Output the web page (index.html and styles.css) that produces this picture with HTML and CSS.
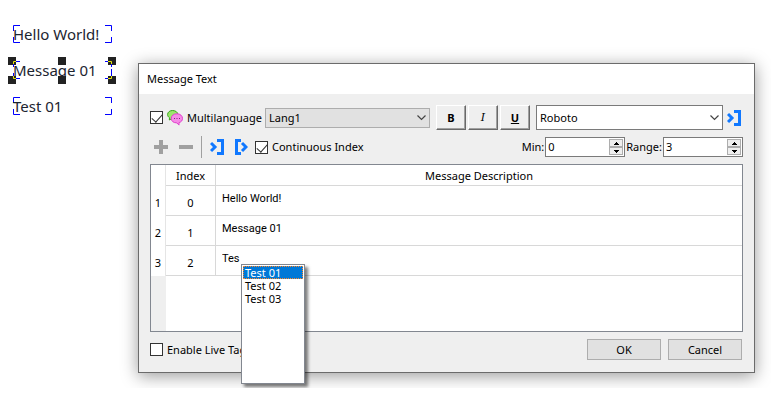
FILE: index.html
```html
<!DOCTYPE html>
<html lang="en">
<head>
<meta charset="utf-8">
<title>Message Text</title>
<link rel="stylesheet" href="styles.css">
</head>
<body>
<svg class="defs" width="0" height="0" aria-hidden="true">
  <symbol id="corners" viewBox="0 0 99 18">
    <path d="M.5 6V.5H7M92 .5h6.500V6M.5 12v5.500H7M92 17.500h6.500V12" fill="none" stroke="#00f"/>
  </symbol>
  <symbol id="in" viewBox="0 0 14 16">
    <path d="M1 4l4 4-4 4M7 1.500h5.500v13H7" fill="none" stroke="#1078ff" stroke-width="3"/>
  </symbol>
  <symbol id="out" viewBox="0 0 14 16">
    <path d="M8 4l4 4-4 4M7 1.500H2.500v13H7" fill="none" stroke="#1078ff" stroke-width="3"/>
  </symbol>
  <symbol id="chevron" viewBox="0 0 9 6">
    <path d="M.5.500l4 4 4-4" fill="none" stroke="#444" stroke-width="1.200"/>
  </symbol>
  <symbol id="up" viewBox="0 0 5 3"><path d="M2 0h1v1h1v1h1v1H0V2h1V1h1z"/></symbol>
  <symbol id="down" viewBox="0 0 5 3"><path d="M0 0h5v1H4v1H3v1H2V2H1V1H0z"/></symbol>
</svg>

<main class="workspace">
  <section class="labels" aria-label="Canvas">
    <div class="label"><svg class="frame"><use href="#corners"/></svg><span>Hello World!</span></div>
    <div class="label">
      <svg class="handles" viewBox="0 0 109 28">
        <path d="M0 0h8v8H0zM50 0h8v8h-8zM100 0h8v8h-8zM0 19h8v8H0zM50 19h8v8h-8zM100 19h8v8h-8z" fill="#222"/>
      </svg>
      <svg class="frame"><use href="#corners"/>
        <path d="M98.500 1v16" stroke="#00f" stroke-dasharray="4 3"/>
        <path d="M.5 3V.5H3M95 .5h3.500V3M.5 15v2.500H3M95 17.500h3.500V15" fill="none" stroke="#e8e800"/>
      </svg>
      <span>Message 01</span>
    </div>
    <div class="label"><svg class="frame"><use href="#corners"/></svg><span>Test 01</span></div>
  </section>

  <form class="dialog" role="dialog" aria-labelledby="title">
    <h1 class="title" id="title">Message Text</h1>
    <div class="content">
      <div class="row">
        <label class="check"><input type="checkbox" checked>
          <svg class="bubbles" width="16" height="16" viewBox="0 0 16 16">
            <path d="M5.500 .5C2.800.5.600 2.200.600 4.500c0 1.400.7 2.500 1.900 3.200L2.300 10 5 8.500c3.200.2 5.800-1.600 5.800-4C10.800 2.200 8.500.5 5.500.5z" fill="#9be66c" stroke="#37a51a"/>
            <path d="M10 3.800C6.600 3.800 4.200 5.800 4.200 8.400c0 2.700 2.300 4.500 5.600 4.500l2.200 2.200v-2.500c2.300-.6 3.500-2.100 3.500-4.200 0-2.600-2.300-4.600-5.500-4.600z" fill="#f58be6" stroke="#e040cc"/>
            <path d="M7 8.500h1M9.500 8.500h1M12 8.500h1" stroke="#8a2080"/>
          </svg>
          <span>Multilanguage</span></label>
        <div class="combo lang">
          <select aria-label="Language"><option>Lang1</option></select>
          <svg class="chevron"><use href="#chevron"/></svg>
        </div>
        <div class="styles">
          <button type="button"><b>B</b></button>
          <button type="button"><i>I</i></button>
          <button type="button"><b><u>U</u></b></button>
        </div>
        <div class="combo font">
          <select aria-label="Font"><option>Roboto</option></select>
          <svg class="chevron"><use href="#chevron"/></svg>
        </div>
        <button type="button" class="tool" aria-label="Apply font"><svg class="bracket"><use href="#in"/></svg></button>
      </div>

      <div class="row second">
        <div class="tools">
          <button type="button" class="tool" aria-label="Add"><svg width="14" height="14"><path d="M5 0h4v5h5v4H9v5H5V9H0V5h5z" fill="#a0a0a0"/></svg></button>
          <button type="button" class="tool" aria-label="Remove"><svg width="14" height="14"><path d="M0 5h14v4H0z" fill="#a0a0a0"/></svg></button>
        </div>
        <div class="tools split">
          <button type="button" class="tool" aria-label="Import"><svg class="bracket"><use href="#in"/></svg></button>
          <button type="button" class="tool" aria-label="Export"><svg class="bracket"><use href="#out"/></svg></button>
        </div>
        <label class="check"><input type="checkbox" checked><span>Continuous Index</span></label>
        <div class="field push">
          <label for="min">Min:</label>
          <div class="spin"><input id="min" type="number" value="0"><span class="steps"><button type="button" aria-label="Increase minimum"><svg><use href="#up"/></svg></button><button type="button" aria-label="Decrease minimum"><svg><use href="#down"/></svg></button></span></div>
        </div>
        <div class="field">
          <label for="range">Range:</label>
          <div class="spin"><input id="range" type="number" value="3"><span class="steps"><button type="button" aria-label="Increase range"><svg><use href="#up"/></svg></button><button type="button" aria-label="Decrease range"><svg><use href="#down"/></svg></button></span></div>
        </div>
      </div>

      <div class="grid">
        <table>
          <thead><tr><td class="num"></td><th class="index">Index</th><th>Message Description</th></tr></thead>
          <tbody>
            <tr><th class="num">1</th><td class="index">0</td><td class="desc">Hello World!</td></tr>
            <tr><th class="num">2</th><td class="index">1</td><td class="desc">Message 01</td></tr>
            <tr><th class="num">3</th><td class="index">2</td><td class="desc"><div class="editor">
              <input type="text" value="Tes" aria-label="Message description">
              <ul class="popup" role="listbox" aria-label="Suggestions">
                <li role="option" aria-selected="true">Test 01</li>
                <li role="option">Test 02</li>
                <li role="option">Test 03</li>
              </ul></div></td></tr>
          </tbody>
        </table>
      </div>

      <div class="footer">
        <label class="check"><input type="checkbox"><span>Enable Live Tag</span></label>
        <button type="submit" class="action">OK</button>
        <button type="button" class="action">Cancel</button>
      </div>
    </div>
  </form>
</main>
</body>
</html>
```
FILE: styles.css
```css
* { box-sizing: border-box; }
body {
  margin: 0;
  background: #fff;
  color: #000;
  font: 11px/14px "Noto Sans", sans-serif;
}
.defs { position: absolute; }
button, input, select { font: inherit; color: inherit; margin: 0; padding: 0; border-radius: 0; }
svg { display: block; flex: none; }

.workspace {
  display: flex;
  align-items: flex-start;
  padding: 0 16px 15px 0;
  overflow: hidden;
}
.labels {
  flex: 0 0 138px;
  display: flex;
  flex-direction: column;
  gap: 18px;
  padding: 25px 0 0 13px;
}
.label {
  position: relative;
  width: 99px;
  height: 18px;
  font: 15px/18px "Noto Sans", sans-serif;
  color: #1c2430;
  white-space: nowrap;
}
.label span { position: relative; }
.frame { position: absolute; inset: 0; width: 99px; height: 18px; }
.handles { position: absolute; left: -5px; top: -4px; width: 109px; height: 28px; }

.dialog {
  flex: 1;
  min-width: 0;
  margin-top: 63px;
  border: 1px solid #6b6b6b;
  background: #efefef;
  box-shadow: 0 3px 16px rgba(0, 0, 0, 0.4);
}
.title {
  margin: 0;
  padding: 0 8px;
  background: #fff;
  font: 11px/30px "Noto Sans", sans-serif;
}
.content { padding: 11px 11px 12px; }
.row { display: flex; align-items: center; height: 25px; }
.second { height: 20px; margin: 7px 0; }
.check { display: flex; align-items: center; gap: 4px; white-space: nowrap; }
.check input {
  appearance: none;
  width: 13px;
  height: 13px;
  border: 1px solid #333;
  background: #fff;
}
.check input:checked::before {
  content: "";
  display: block;
  width: 9px;
  height: 5px;
  margin: 2px 1px;
  border: solid #333;
  border-width: 0 0 1px 1px;
  transform: rotate(-48deg);
}

.combo { position: relative; display: flex; align-items: center; }
.combo select {
  appearance: none;
  width: 100%;
  height: 100%;
  padding: 0 20px 0 3px;
  border: 1px solid #7a7a7a;
  background: #fff;
}
.lang { width: 165px; height: 20px; margin-left: auto; }
.lang select { background: #e1e1e1; border-color: #adadad; }
.font { width: 187px; height: 25px; }
.chevron { position: absolute; right: 4px; width: 9px; height: 6px; pointer-events: none; }

.styles { display: flex; gap: 2px; margin: 0 6px; }
.styles button {
  width: 30px;
  height: 25px;
  border: 1px solid;
  border-color: #fff #696969 #696969 #fff;
  background: #efefef;
  box-shadow: inset -1px -1px #a0a0a0;
}
.styles i { font-family: "DejaVu Serif", serif; }

.tool { border: 0; background: none; }
.row > .tool { margin: 0 2px 0 4px; }
.bracket { width: 14px; height: 16px; }
.tools { display: flex; align-items: center; gap: 11px; padding: 0 8px 0 4px; }
.split { gap: 10px; height: 22px; padding: 0 7px 0 8px; border-left: 1px solid #a0a0a0; }
.field { display: flex; align-items: center; gap: 1px; margin-left: 1px; }
.push { margin-left: auto; }
.spin {
  display: flex;
  width: 80px;
  height: 20px;
  border: 1px solid #7a7a7a;
  background: #fff;
}
.spin input {
  flex: 1;
  min-width: 0;
  padding-left: 2px;
  border: 0;
  background: none;
  appearance: textfield;
  outline: 0;
}
.spin input::-webkit-inner-spin-button { appearance: none; }
.steps { display: flex; flex-direction: column; width: 15px; padding: 1px 1px 1px 0; }
.steps button {
  flex: 1;
  display: grid;
  place-items: center;
  border: 1px solid #adadad;
  background: #efefef;
}
.steps svg { width: 5px; height: 3px; }

.grid {
  min-height: 168px;
  border: 1px solid #828790;
  background: linear-gradient(90deg, #efefef 15px, #fff 15px);
}
table { width: 100%; border-spacing: 0; table-layout: fixed; background: #fff; }
th { font-weight: normal; }
td, th { height: 30px; padding: 2px 0 0; border: solid #d8d8d8; border-width: 0 0 1px; }
thead td, thead th { height: 21px; }
.num { width: 15px; text-align: center; border-width: 0 1px 0 0; border-color: #e5e5e5; }
.index { width: 50px; text-align: center; border-right-width: 1px; }
tbody .num, tbody .index { padding-top: 4px; }
.desc { padding: 6px 6px 5px; vertical-align: top; font-family: Roboto, sans-serif; font-size: 11px; }
.editor { position: relative; }
.editor input { display: block; width: 100%; height: 14px; border: 0; outline: 0; }
.popup {
  position: absolute;
  left: 19px;
  top: 12px;
  width: 64px;
  min-height: 120px;
  margin: 0;
  padding: 1px;
  list-style: none;
  border: 1px solid #828790;
  background: #fff;
  box-shadow: 3px 3px 3px rgba(0, 0, 0, 0.5);
  font: 11px/13px "Noto Sans", sans-serif;
}
.popup li { padding: 0 2px; }
.popup [aria-selected] { background: #0078d7; color: #fff; outline: 1px dotted #ff8728; outline-offset: -1px; }

.footer { display: flex; align-items: center; gap: 7px; margin-top: 7px; padding-right: 1px; }
.footer .check { margin-right: auto; }
.action { width: 74px; height: 21px; border: 1px solid #adadad; background: #e1e1e1; }
```
